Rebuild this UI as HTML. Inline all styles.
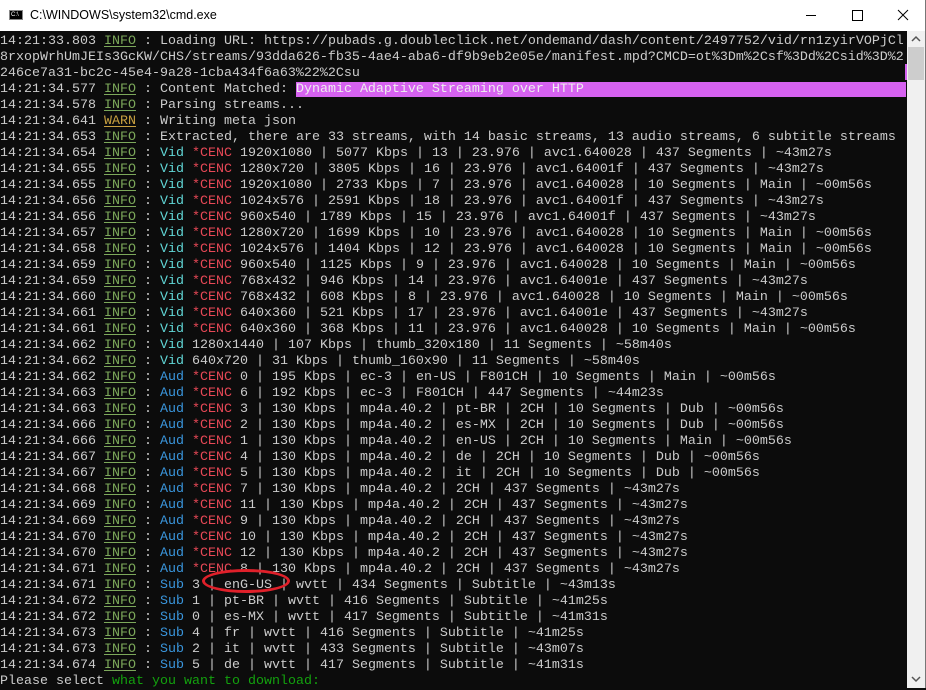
<!DOCTYPE html>
<html><head><meta charset="utf-8"><style>
body{margin:0;width:926px;height:688px;overflow:hidden;background:#0c0c0c;position:relative;font-family:"Liberation Mono",monospace}
#title{position:absolute;left:0;top:0;width:926px;height:31px;background:#fff;font-family:"Liberation Sans",sans-serif;font-size:12.5px;color:#000}
#title .t{position:absolute;left:30px;top:8px}
#title .ic{position:absolute;left:9px;top:10px;width:14px;height:10px;background:#000;border:1px solid #888;box-sizing:border-box}
#title .ic:after{content:"C:\\";position:absolute;left:1px;top:0;color:#fff;font-size:6px;line-height:8px}
.ctl{position:absolute;top:0;width:46px;height:31px}
#term{position:absolute;left:0;top:34px;width:906px;height:656px;overflow:hidden}
.l{height:16px;line-height:16px;font-size:13.33px;color:#cccccc;white-space:pre}
.i{color:#7ca85a;text-decoration:underline;text-underline-offset:2px}
.w{color:#c8a040;text-decoration:underline;text-underline-offset:2px}
.v{color:#61d6d6}.a{color:#3a96dd}.c{color:#e74856}.g{color:#13a10e}
.hl{background:#d662f0;color:#eee}
#sb{position:absolute;left:907px;top:31px;width:18px;height:657px;background:#f0f0f0}
#thumb{position:absolute;left:908px;top:47px;width:16px;height:33px;background:#cdcdcd}
#edge{position:absolute;left:925px;top:0;width:1px;height:688px;background:#777}
#ell{position:absolute;left:202px;top:569px;width:88px;height:24px;border:3px solid #e0202a;border-radius:50%;box-sizing:border-box}
#mag{position:absolute;left:905px;top:64px;width:2px;height:16px;background:#d662f0}
</style></head><body>
<div id="title"><div class="ic"></div><span class="t">C:\WINDOWS\system32\cmd.exe</span>
<svg class="ctl" style="left:788px" viewBox="0 0 46 31"><line x1="18" y1="15.5" x2="28" y2="15.5" stroke="#000"/></svg>
<svg class="ctl" style="left:834px" viewBox="0 0 46 31"><rect x="18.5" y="10.5" width="10" height="10" fill="none" stroke="#000"/></svg>
<svg class="ctl" style="left:880px" viewBox="0 0 46 31"><path d="M18 10L28 20M28 10L18 20" stroke="#000"/></svg>
</div>
<div id="term">
<div class="l">14:21:33.803 <span class="i">INFO</span> : Loading URL: https://pubads.g.doubleclick.net/ondemand/dash/content/2497752/vid/rn1zyirVOPjCl</div>
<div class="l">8rxopWrhUmJEIs3GcKW/CHS/streams/93dda626-fb35-4ae4-aba6-df9b9eb2e05e/manifest.mpd?CMCD=ot%3Dm%2Csf%3Dd%2Csid%3D%2</div>
<div class="l">246ce7a31-bc2c-45e4-9a28-1cba434f6a63%22%2Csu</div>
<div class="l">14:21:34.577 <span class="i">INFO</span> : Content Matched: <span class="hl">Dynamic Adaptive Streaming over HTTP                                            </span></div>
<div class="l">14:21:34.578 <span class="i">INFO</span> : Parsing streams...</div>
<div class="l">14:21:34.641 <span class="w">WARN</span> : Writing meta json</div>
<div class="l">14:21:34.653 <span class="i">INFO</span> : Extracted, there are 33 streams, with 14 basic streams, 13 audio streams, 6 subtitle streams</div>
<div class="l">14:21:34.654 <span class="i">INFO</span> : <span class="v">Vid</span> <span class="c">*CENC</span> 1920x1080 | 5077 Kbps | 13 | 23.976 | avc1.640028 | 437 Segments | ~43m27s</div>
<div class="l">14:21:34.655 <span class="i">INFO</span> : <span class="v">Vid</span> <span class="c">*CENC</span> 1280x720 | 3805 Kbps | 16 | 23.976 | avc1.64001f | 437 Segments | ~43m27s</div>
<div class="l">14:21:34.655 <span class="i">INFO</span> : <span class="v">Vid</span> <span class="c">*CENC</span> 1920x1080 | 2733 Kbps | 7 | 23.976 | avc1.640028 | 10 Segments | Main | ~00m56s</div>
<div class="l">14:21:34.656 <span class="i">INFO</span> : <span class="v">Vid</span> <span class="c">*CENC</span> 1024x576 | 2591 Kbps | 18 | 23.976 | avc1.64001f | 437 Segments | ~43m27s</div>
<div class="l">14:21:34.656 <span class="i">INFO</span> : <span class="v">Vid</span> <span class="c">*CENC</span> 960x540 | 1789 Kbps | 15 | 23.976 | avc1.64001f | 437 Segments | ~43m27s</div>
<div class="l">14:21:34.657 <span class="i">INFO</span> : <span class="v">Vid</span> <span class="c">*CENC</span> 1280x720 | 1699 Kbps | 10 | 23.976 | avc1.640028 | 10 Segments | Main | ~00m56s</div>
<div class="l">14:21:34.658 <span class="i">INFO</span> : <span class="v">Vid</span> <span class="c">*CENC</span> 1024x576 | 1404 Kbps | 12 | 23.976 | avc1.640028 | 10 Segments | Main | ~00m56s</div>
<div class="l">14:21:34.659 <span class="i">INFO</span> : <span class="v">Vid</span> <span class="c">*CENC</span> 960x540 | 1125 Kbps | 9 | 23.976 | avc1.640028 | 10 Segments | Main | ~00m56s</div>
<div class="l">14:21:34.659 <span class="i">INFO</span> : <span class="v">Vid</span> <span class="c">*CENC</span> 768x432 | 946 Kbps | 14 | 23.976 | avc1.64001e | 437 Segments | ~43m27s</div>
<div class="l">14:21:34.660 <span class="i">INFO</span> : <span class="v">Vid</span> <span class="c">*CENC</span> 768x432 | 608 Kbps | 8 | 23.976 | avc1.640028 | 10 Segments | Main | ~00m56s</div>
<div class="l">14:21:34.661 <span class="i">INFO</span> : <span class="v">Vid</span> <span class="c">*CENC</span> 640x360 | 521 Kbps | 17 | 23.976 | avc1.64001e | 437 Segments | ~43m27s</div>
<div class="l">14:21:34.661 <span class="i">INFO</span> : <span class="v">Vid</span> <span class="c">*CENC</span> 640x360 | 368 Kbps | 11 | 23.976 | avc1.640028 | 10 Segments | Main | ~00m56s</div>
<div class="l">14:21:34.662 <span class="i">INFO</span> : <span class="v">Vid</span> 1280x1440 | 107 Kbps | thumb_320x180 | 11 Segments | ~58m40s</div>
<div class="l">14:21:34.662 <span class="i">INFO</span> : <span class="v">Vid</span> 640x720 | 31 Kbps | thumb_160x90 | 11 Segments | ~58m40s</div>
<div class="l">14:21:34.662 <span class="i">INFO</span> : <span class="a">Aud</span> <span class="c">*CENC</span> 0 | 195 Kbps | ec-3 | en-US | F801CH | 10 Segments | Main | ~00m56s</div>
<div class="l">14:21:34.663 <span class="i">INFO</span> : <span class="a">Aud</span> <span class="c">*CENC</span> 6 | 192 Kbps | ec-3 | F801CH | 447 Segments | ~44m23s</div>
<div class="l">14:21:34.663 <span class="i">INFO</span> : <span class="a">Aud</span> <span class="c">*CENC</span> 3 | 130 Kbps | mp4a.40.2 | pt-BR | 2CH | 10 Segments | Dub | ~00m56s</div>
<div class="l">14:21:34.666 <span class="i">INFO</span> : <span class="a">Aud</span> <span class="c">*CENC</span> 2 | 130 Kbps | mp4a.40.2 | es-MX | 2CH | 10 Segments | Dub | ~00m56s</div>
<div class="l">14:21:34.666 <span class="i">INFO</span> : <span class="a">Aud</span> <span class="c">*CENC</span> 1 | 130 Kbps | mp4a.40.2 | en-US | 2CH | 10 Segments | Main | ~00m56s</div>
<div class="l">14:21:34.667 <span class="i">INFO</span> : <span class="a">Aud</span> <span class="c">*CENC</span> 4 | 130 Kbps | mp4a.40.2 | de | 2CH | 10 Segments | Dub | ~00m56s</div>
<div class="l">14:21:34.667 <span class="i">INFO</span> : <span class="a">Aud</span> <span class="c">*CENC</span> 5 | 130 Kbps | mp4a.40.2 | it | 2CH | 10 Segments | Dub | ~00m56s</div>
<div class="l">14:21:34.668 <span class="i">INFO</span> : <span class="a">Aud</span> <span class="c">*CENC</span> 7 | 130 Kbps | mp4a.40.2 | 2CH | 437 Segments | ~43m27s</div>
<div class="l">14:21:34.669 <span class="i">INFO</span> : <span class="a">Aud</span> <span class="c">*CENC</span> 11 | 130 Kbps | mp4a.40.2 | 2CH | 437 Segments | ~43m27s</div>
<div class="l">14:21:34.669 <span class="i">INFO</span> : <span class="a">Aud</span> <span class="c">*CENC</span> 9 | 130 Kbps | mp4a.40.2 | 2CH | 437 Segments | ~43m27s</div>
<div class="l">14:21:34.670 <span class="i">INFO</span> : <span class="a">Aud</span> <span class="c">*CENC</span> 10 | 130 Kbps | mp4a.40.2 | 2CH | 437 Segments | ~43m27s</div>
<div class="l">14:21:34.670 <span class="i">INFO</span> : <span class="a">Aud</span> <span class="c">*CENC</span> 12 | 130 Kbps | mp4a.40.2 | 2CH | 437 Segments | ~43m27s</div>
<div class="l">14:21:34.671 <span class="i">INFO</span> : <span class="a">Aud</span> <span class="c">*CENC</span> 8 | 130 Kbps | mp4a.40.2 | 2CH | 437 Segments | ~43m27s</div>
<div class="l">14:21:34.671 <span class="i">INFO</span> : <span class="a">Sub</span> 3 | enG-US | wvtt | 434 Segments | Subtitle | ~43m13s</div>
<div class="l">14:21:34.672 <span class="i">INFO</span> : <span class="a">Sub</span> 1 | pt-BR | wvtt | 416 Segments | Subtitle | ~41m25s</div>
<div class="l">14:21:34.672 <span class="i">INFO</span> : <span class="a">Sub</span> 0 | es-MX | wvtt | 417 Segments | Subtitle | ~41m31s</div>
<div class="l">14:21:34.673 <span class="i">INFO</span> : <span class="a">Sub</span> 4 | fr | wvtt | 416 Segments | Subtitle | ~41m25s</div>
<div class="l">14:21:34.673 <span class="i">INFO</span> : <span class="a">Sub</span> 2 | it | wvtt | 433 Segments | Subtitle | ~43m07s</div>
<div class="l">14:21:34.674 <span class="i">INFO</span> : <span class="a">Sub</span> 5 | de | wvtt | 417 Segments | Subtitle | ~41m31s</div>
<div class="l">Please select <span class="g">what you want to download:</span></div>
</div>
<div id="mag"></div>
<div id="ell"></div>
<div id="sb"></div>
<div id="thumb"></div>
<svg style="position:absolute;left:909px;top:34px" width="14" height="10"><path d="M3 7L7 3L11 7" stroke="#555" stroke-width="1.5" fill="none"/></svg>
<svg style="position:absolute;left:909px;top:674px" width="14" height="10"><path d="M3 3L7 7L11 3" stroke="#555" stroke-width="1.5" fill="none"/></svg>
<div id="edge"></div>
</body></html>
